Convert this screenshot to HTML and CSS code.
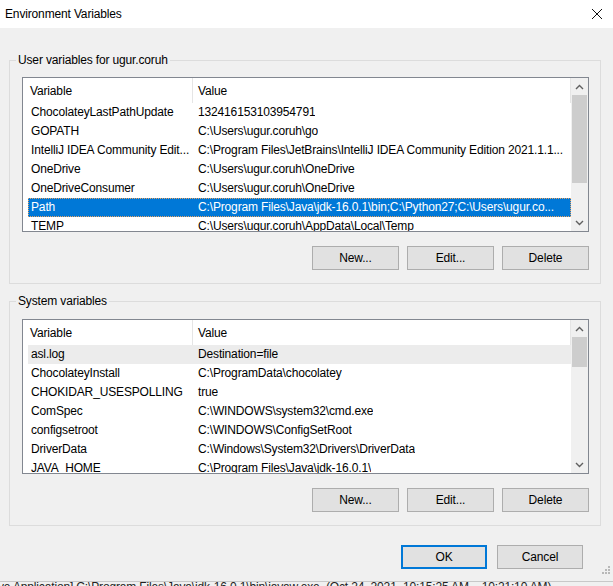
FILE: index.html
```html
<!DOCTYPE html>
<html>
<head>
<meta charset="utf-8">
<link rel="stylesheet" href="styles.css">
</head>
<body>
<div class="window">
  <div class="titlebar">
    <span class="title">Environment Variables</span>
    <svg class="close" width="12" height="12" viewBox="0 0 12 12"><path d="M1 1 L11 11 M11 1 L1 11" stroke="#111" stroke-width="1" fill="none"/></svg>
  </div>
  <div class="content">
    <fieldset class="group">
      <legend>User variables for ugur.coruh</legend>
      <div class="listview">
        <div class="lv-main">
          <div class="lv-header"><div class="c1">Variable</div><div class="c2">Value</div></div>
          <div class="row"><span class="c1">ChocolateyLastPathUpdate</span><span class="c2">132416153103954791</span></div>
          <div class="row"><span class="c1">GOPATH</span><span class="c2">C:\Users\ugur.coruh\go</span></div>
          <div class="row"><span class="c1">IntelliJ IDEA Community Edit...</span><span class="c2">C:\Program Files\JetBrains\IntelliJ IDEA Community Edition 2021.1.1...</span></div>
          <div class="row"><span class="c1">OneDrive</span><span class="c2">C:\Users\ugur.coruh\OneDrive</span></div>
          <div class="row"><span class="c1">OneDriveConsumer</span><span class="c2">C:\Users\ugur.coruh\OneDrive</span></div>
          <div class="row selected"><span class="c1">Path</span><span class="c2">C:\Program Files\Java\jdk-16.0.1\bin;C:\Python27;C:\Users\ugur.co...</span></div>
          <div class="row"><span class="c1">TEMP</span><span class="c2">C:\Users\ugur.coruh\AppData\Local\Temp</span></div>
        </div>
        <div class="scrollbar">
          <div class="sb-btn"><svg width="9" height="6" viewBox="0 0 9 6"><path d="M1 5 L4.5 1.5 L8 5" stroke="#606060" stroke-width="1.4" fill="none"/></svg></div>
          <div class="sb-track"><div class="sb-thumb thumb-user"></div></div>
          <div class="sb-btn"><svg width="9" height="6" viewBox="0 0 9 6"><path d="M1 1 L4.5 4.5 L8 1" stroke="#606060" stroke-width="1.4" fill="none"/></svg></div>
        </div>
      </div>
      <div class="btn-row">
        <button class="btn">New...</button>
        <button class="btn">Edit...</button>
        <button class="btn">Delete</button>
      </div>
    </fieldset>

    <fieldset class="group group-sys">
      <legend>System variables</legend>
      <div class="listview">
        <div class="lv-main">
          <div class="lv-header"><div class="c1">Variable</div><div class="c2">Value</div></div>
          <div class="row inactive"><span class="c1">asl.log</span><span class="c2">Destination=file</span></div>
          <div class="row"><span class="c1">ChocolateyInstall</span><span class="c2">C:\ProgramData\chocolatey</span></div>
          <div class="row"><span class="c1">CHOKIDAR_USESPOLLING</span><span class="c2">true</span></div>
          <div class="row"><span class="c1">ComSpec</span><span class="c2">C:\WINDOWS\system32\cmd.exe</span></div>
          <div class="row"><span class="c1">configsetroot</span><span class="c2">C:\WINDOWS\ConfigSetRoot</span></div>
          <div class="row"><span class="c1">DriverData</span><span class="c2">C:\Windows\System32\Drivers\DriverData</span></div>
          <div class="row"><span class="c1">JAVA_HOME</span><span class="c2">C:\Program Files\Java\jdk-16.0.1\</span></div>
        </div>
        <div class="scrollbar">
          <div class="sb-btn"><svg width="9" height="6" viewBox="0 0 9 6"><path d="M1 5 L4.5 1.5 L8 5" stroke="#606060" stroke-width="1.4" fill="none"/></svg></div>
          <div class="sb-track"><div class="sb-thumb thumb-sys"></div></div>
          <div class="sb-btn"><svg width="9" height="6" viewBox="0 0 9 6"><path d="M1 1 L4.5 4.5 L8 1" stroke="#606060" stroke-width="1.4" fill="none"/></svg></div>
        </div>
      </div>
      <div class="btn-row">
        <button class="btn">New...</button>
        <button class="btn">Edit...</button>
        <button class="btn">Delete</button>
      </div>
    </fieldset>

    <div class="actions">
      <button class="btn btn-wide btn-default">OK</button>
      <button class="btn btn-wide">Cancel</button>
    </div>
    <svg class="grip" width="10" height="10" viewBox="0 0 10 10">
      <rect x="7" y="1" width="2" height="2" fill="#b8b8b8"/>
      <rect x="4" y="4" width="2" height="2" fill="#b8b8b8"/>
      <rect x="7" y="4" width="2" height="2" fill="#b8b8b8"/>
      <rect x="1" y="7" width="2" height="2" fill="#b8b8b8"/>
      <rect x="4" y="7" width="2" height="2" fill="#b8b8b8"/>
      <rect x="7" y="7" width="2" height="2" fill="#b8b8b8"/>
    </svg>
  </div>
  <div class="behind"><span>ve Application] C:\Program Files\Java\jdk-16.0.1\bin\javaw.exe&nbsp; (Oct 24, 2021, 10:15:25 AM – 10:21:10 AM)</span></div>
</div>
</body>
</html>
```

FILE: styles.css
```css
* { box-sizing: border-box; }
html, body { margin: 0; padding: 0; }
body {
  width: 613px;
  height: 586px;
  overflow: hidden;
  background: #f0f0f0;
  font-family: "Liberation Sans", Arial, sans-serif;
  font-size: 12px;
  letter-spacing: -0.15px;
  color: #000;
}
.window {
  width: 613px;
  height: 586px;
  display: flex;
  flex-direction: column;
}
.titlebar {
  height: 28px;
  background: #fff;
  display: flex;
  align-items: center;
  justify-content: space-between;
  padding: 0 10px 0 5px;
  flex: none;
}
.title { line-height: 16px; }
.close { display: block; }
.content {
  position: relative;
  flex: 1;
  display: flex;
  flex-direction: column;
  padding: 0 0 0 9px;
}
.group {
  width: 592px;
  margin: 24px 0 0 0;
  padding: 9px 11px 13px 12px;
  border: 1px solid #dcdcdc;
  min-width: 0;
}
.group-sys {
  margin-top: 9px;
  padding-top: 10px;
}
.group legend {
  padding: 0 2px;
  margin-left: -6px;
  line-height: 16px;
}
.listview {
  height: 155px;
  border: 1px solid #828790;
  background: #fff;
  display: flex;
  overflow: hidden;
}
.lv-main {
  flex: 1;
  min-width: 0;
  overflow: hidden;
}
.lv-header {
  height: 25px;
  display: flex;
  align-items: center;
  border-right: 1px solid #e5e5e5;
}
.lv-header .c1 {
  width: 170px;
  height: 100%;
  padding-left: 7px;
  display: flex;
  align-items: center;
  border-right: 1px solid #e5e5e5;
}
.lv-header .c2 { padding-left: 5px; }
.row {
  height: 19px;
  line-height: 19px;
  margin-left: 5px;
  display: flex;
  white-space: nowrap;
}
.row .c1 {
  width: 165px;
  padding-left: 3px;
  overflow: hidden;
  flex: none;
}
.row .c2 {
  padding-left: 5px;
  overflow: hidden;
}
.row.selected {
  background: #0078d7;
  color: #fff;
  outline: 1px dotted #e9a464;
  outline-offset: -1px;
}
.row.inactive { background: #ececec; }
.scrollbar {
  width: 17px;
  flex: none;
  background: #f0f0f0;
  display: flex;
  flex-direction: column;
}
.sb-btn {
  height: 17px;
  flex: none;
  display: flex;
  align-items: center;
  justify-content: center;
}
.sb-btn svg { display: block; }
.sb-track { flex: 1; padding: 0 1px; }
.sb-thumb { background: #cdcdcd; }
.thumb-user { height: 88px; }
.thumb-sys { height: 30px; }
.btn-row {
  display: flex;
  justify-content: flex-end;
  gap: 8px;
  margin-top: 14px;
}
.btn {
  font: inherit;
  letter-spacing: inherit;
  color: #000;
  width: 87px;
  height: 24px;
  padding: 0;
  background: #e1e1e1;
  border: 1px solid #adadad;
  border-radius: 0;
}
.actions {
  display: flex;
  justify-content: flex-end;
  gap: 10px;
  margin-top: 19px;
  padding-right: 30px;
}
.btn-wide { width: 86px; }
.btn-default { border: 2px solid #0078d7; }
.grip {
  position: absolute;
  right: 2px;
  bottom: 6px;
}
.behind {
  height: 5px;
  flex: none;
  overflow: hidden;
  background: #f0f0f0;
  border-top: 1px solid #c8c8c8;
  white-space: nowrap;
  margin-left: -2px;
}
.behind span {
  display: block;
  line-height: 12px;
  margin-top: -1px;
  color: #222;
}
```
